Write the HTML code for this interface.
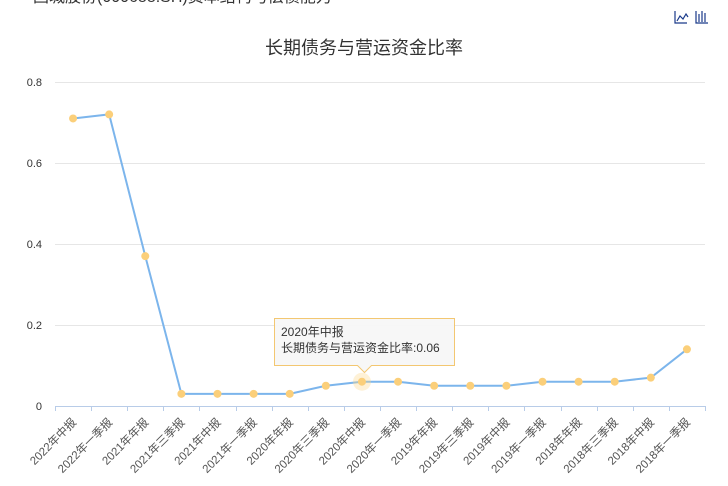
<!DOCTYPE html>
<html><head><meta charset="utf-8"><style>
body{margin:0;width:728px;height:486px;overflow:hidden;background:#fff;font-family:"Liberation Sans","Noto Sans CJK SC",sans-serif;}
</style></head><body>
<svg width="728" height="486" xmlns="http://www.w3.org/2000/svg" style="position:absolute;left:0;top:0;font-family:'Liberation Sans','Noto Sans CJK SC',sans-serif">
<text x="33" y="2" font-size="16" fill="#333">国城股份(000688.SH)资本结构与偿债能力</text>
<g stroke="#1a3a8a" fill="none" stroke-width="1.2">
<path d="M675 11v12h12M677 21l3-5 3 3 3-5 2 3"/>
<path d="M696 11v12h12M699 22v-8M702 22v-11M705 22v-9"/>
</g>
<text x="364" y="54" font-size="18" fill="#333" text-anchor="middle">长期债务与营运资金比率</text>
<g stroke="#e6e6e6" stroke-width="1">
<line x1="55" y1="82.5" x2="705" y2="82.5"/><line x1="55" y1="163.5" x2="705" y2="163.5"/>
<line x1="55" y1="244.5" x2="705" y2="244.5"/><line x1="55" y1="325.5" x2="705" y2="325.5"/>
</g>
<g font-size="11" fill="#333" text-anchor="end">
<text x="42" y="86">0.8</text><text x="42" y="167">0.6</text><text x="42" y="248">0.4</text><text x="42" y="329">0.2</text><text x="42" y="410">0</text>
</g>
<line x1="55" y1="406.5" x2="705" y2="406.5" stroke="#b8cce8"/>
<g id="ticks" stroke="#b8cce8"></g>
<g id="labels" font-size="11.5" fill="#555"></g>
<polyline id="ln" fill="none" stroke="#7cb5ec" stroke-width="2"/>
<circle cx="362" cy="381.7" r="9" fill="#fbd88a" opacity="0.35"/>
<g id="pts" fill="#fbcf7a"></g>
<g>
<path d="M274.5 318.5h180v47h-83l-7 7-7-7h-83z" fill="#f7f7f7" stroke="#f3c56a" opacity="0.95"/>
<text x="281" y="336" font-size="12" fill="#333">2020年中报</text>
<text x="281" y="352" font-size="12" fill="#333">长期债务与营运资金比率:0.06</text>
</g>
</svg>
<script>
var v=[.71,.72,.37,.03,.03,.03,.03,.05,.06,.06,.05,.05,.05,.06,.06,.06,.07,.14];
var L=["2022年中报","2022年一季报","2021年年报","2021年三季报","2021年中报","2021年一季报","2020年年报","2020年三季报","2020年中报","2020年一季报","2019年年报","2019年三季报","2019年中报","2019年一季报","2018年年报","2018年三季报","2018年中报","2018年一季报"];
var w=650/18,pts=[],ns="http://www.w3.org/2000/svg",t=document.getElementById('ticks'),lb=document.getElementById('labels'),pg=document.getElementById('pts');
for(var i=0;i<=18;i++){var l=document.createElementNS(ns,'line');var x=Math.round(55+i*w)+.5;l.setAttribute('x1',x);l.setAttribute('x2',x);l.setAttribute('y1',406);l.setAttribute('y2',411);t.appendChild(l);}
v.forEach(function(a,i){var x=55+w/2+i*w,y=406-a*405;pts.push(x+','+y);
var c=document.createElementNS(ns,'circle');c.setAttribute('cx',x);c.setAttribute('cy',y);c.setAttribute('r',4);pg.appendChild(c);
var tx=document.createElementNS(ns,'text');tx.setAttribute('text-anchor','end');tx.setAttribute('transform','translate('+(x+4)+',423) rotate(-45)');tx.textContent=L[i];lb.appendChild(tx);});
document.getElementById('ln').setAttribute('points',pts.join(' '));
</script>
</body></html>
